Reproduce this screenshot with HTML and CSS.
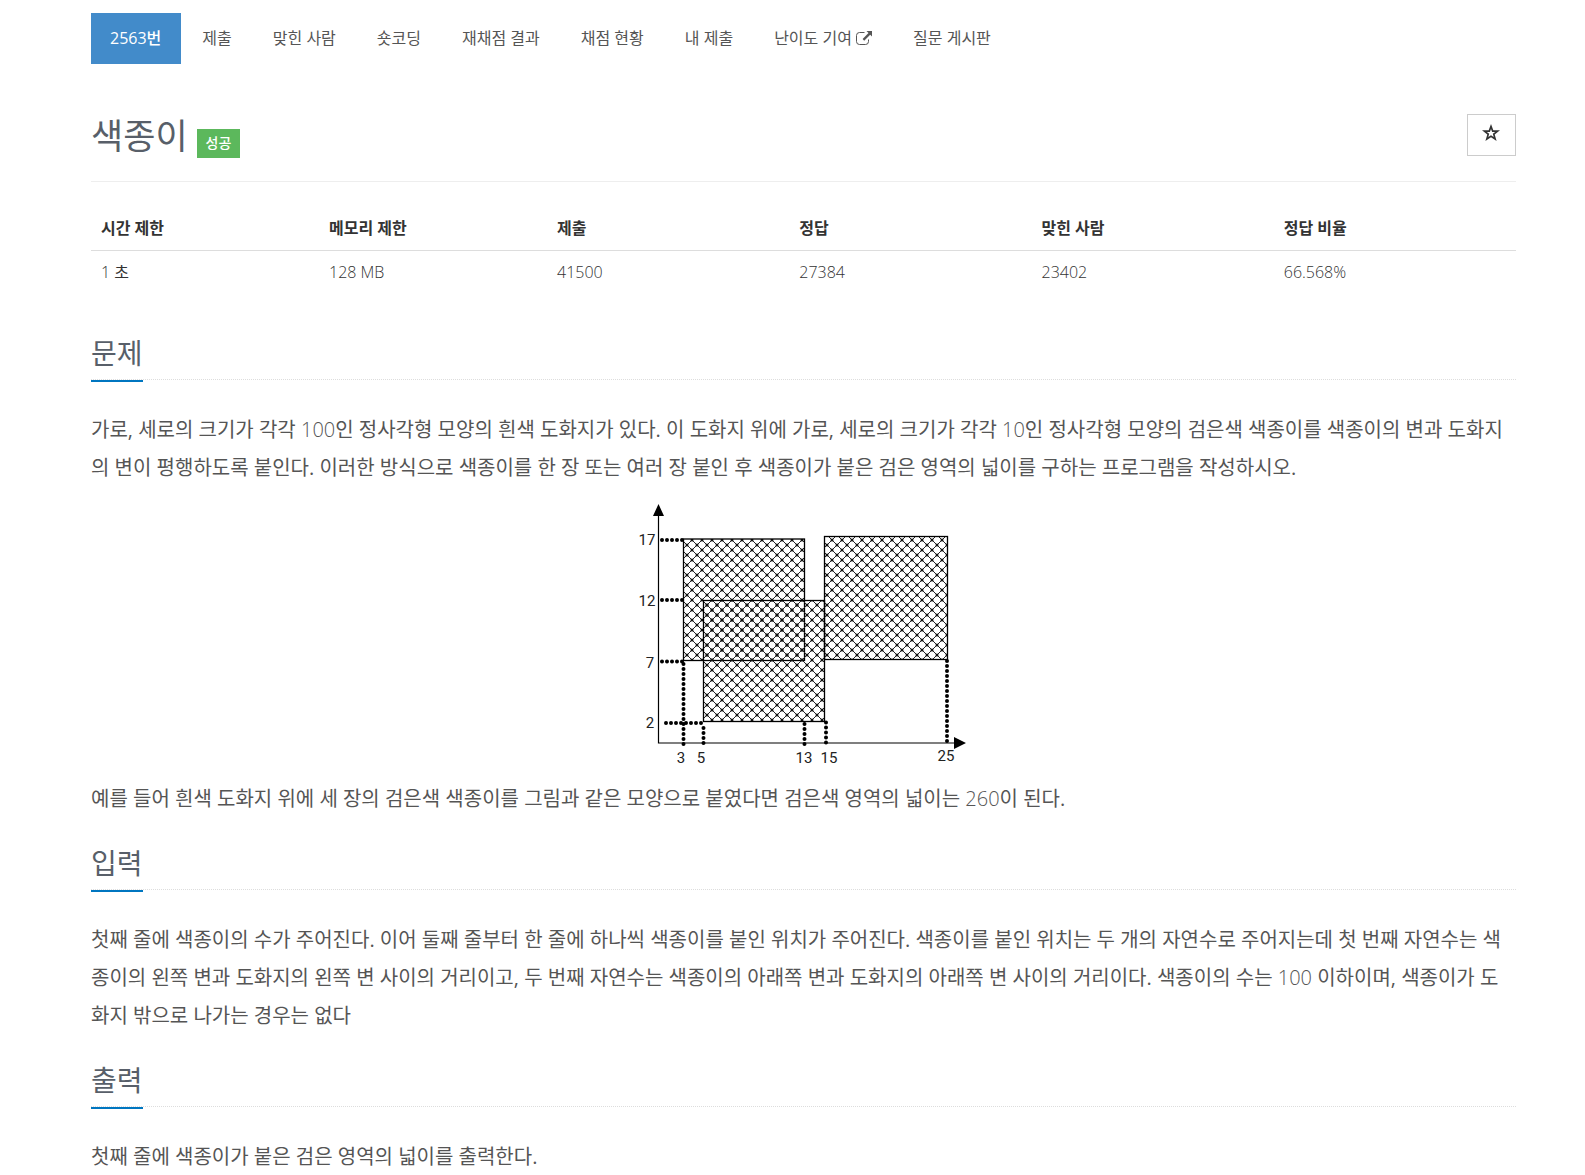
FILE: index.html
```
<!DOCTYPE html>
<html lang="ko">
<head>
  <meta charset="UTF-8" />
  <meta name="viewport" content="width=device-width, initial-scale=1.0"/>
  <title>2563번: 색종이</title>
  <link rel="stylesheet" href="styles.css">
</head>
<body>
  <div class="container">
    <nav>
      <ul class="problem-menu">
        <li><a class="active" href="#">2563번</a></li>
        <li><a href="#">제출</a></li>
        <li><a href="#">맞힌 사람</a></li>
        <li><a href="#">숏코딩</a></li>
        <li><a href="#">재채점 결과</a></li>
        <li><a href="#">채점 현황</a></li>
        <li><a href="#">내 제출</a></li>
        <li><a href="#">난이도 기여 <svg class="icon-external" viewBox="0 0 16 14" aria-hidden="true">
          <path d="M8.500 1.500H3.500Q.5 1.500 .5 4.500V10.500Q.5 13.500 3.500 13.500H9.500Q12.500 13.500 12.500 10.500V8.500" fill="none" stroke="currentColor"/>
          <path d="M10.500 0H16V5.500L14.200 3.700L8.200 9.700L6.600 8.100L12.500 2Z" fill="currentColor"/>
        </svg></a></li>
        <li><a href="#">질문 게시판</a></li>
      </ul>
    </nav>

    <header class="page-header">
      <div class="title">
        <h1>색종이</h1>
        <span class="label-success">성공</span>
      </div>
      <button class="btn-favorite" type="button" aria-label="즐겨찾기">
        <svg viewBox="0 0 18 18" aria-hidden="true">
          <path fill-rule="evenodd" d="M9 0L11.300 6.200H18L12.700 10.400L14.600 17L9 13.200L3.400 17L5.300 10.400L0 6.200H6.700ZM9 5L7.900 7.900H4.800L7.200 9.800L6.300 13L9 11.200L11.700 13L10.800 9.800L13.200 7.900H10.100Z"/>
        </svg>
      </button>
    </header>

    <table class="problem-info">
      <thead>
        <tr>
          <th class="limit">시간 제한</th>
          <th class="limit">메모리 제한</th>
          <th>제출</th>
          <th>정답</th>
          <th>맞힌 사람</th>
          <th>정답 비율</th>
        </tr>
      </thead>
      <tbody>
        <tr>
          <td><span class="num">1</span> 초</td>
          <td class="num">128 MB</td>
          <td class="num">41500</td>
          <td class="num">27384</td>
          <td class="num">23402</td>
          <td class="num">66.568%</td>
        </tr>
      </tbody>
    </table>

    <section>
      <div class="headline"><h2>문제</h2></div>
      <p>가로, 세로의 크기가 각각 <span class="num">100</span>인 정사각형 모양의 흰색 도화지가 있다. 이 도화지 위에 가로, 세로의 크기가 각각 <span class="num">10</span>인 정사각형 모양의 검은색 색종이를 색종이의 변과 도화지의 변이 평행하도록 붙인다. 이러한 방식으로 색종이를 한 장 또는 여러 장 붙인 후 색종이가 붙은 검은 영역의 넓이를 구하는 프로그램을 작성하시오.</p>
      <svg class="figure" viewBox="0 0 336 268" width="336" height="268" role="img" aria-label="색종이 세 장의 배치">
        <defs>
          <pattern id="hatch" x="6" y="0" width="10" height="10" patternUnits="userSpaceOnUse">
            <path d="M-1 -1L11 11M11 -1L-1 11" stroke="#222" stroke-width="1"/>
            <g fill="#111">
              <circle cx="0" cy="0" r="1.500"/>
              <circle cx="10" cy="0" r="1.500"/>
              <circle cx="0" cy="10" r="1.500"/>
              <circle cx="10" cy="10" r="1.500"/>
              <circle cx="5" cy="5" r="1.500"/>
            </g>
          </pattern>
        </defs>

        <!-- papers -->
        <g fill="url(#hatch)" stroke="#000" stroke-width="1.300">
          <rect x="47.500" y="39" width="121" height="121.500"/>
          <rect x="67.500" y="100.500" width="121" height="121"/>
          <rect x="188.500" y="36.500" width="123" height="123"/>
        </g>

        <!-- axes -->
        <path d="M22.500 10V243H322" fill="none" stroke="#000" stroke-width="1.200"/>
        <path d="M22.500 4L28 16H17ZM330 243L318 249V237Z"/>

        <!-- guides -->
        <g class="guides">
          <path d="M26 40H48"/>
          <path d="M26 100H48"/>
          <path d="M26 161.500H48"/>
          <path d="M30 223H68"/>
          <path d="M47.500 164V245"/>
          <path d="M67.500 228V244"/>
          <path d="M168.500 224V245"/>
          <path d="M190 222.500V244"/>
          <path d="M311 161V242"/>
        </g>

        <g class="ticks">
          <text x="11" y="45">17</text>
          <text x="11" y="106">12</text>
          <text x="14" y="168">7</text>
          <text x="14" y="228">2</text>
          <text x="45" y="263">3</text>
          <text x="65" y="263">5</text>
          <text x="168" y="263">13</text>
          <text x="193" y="263">15</text>
          <text x="310" y="261">25</text>
        </g>
      </svg>
      <p>예를 들어 흰색 도화지 위에 세 장의 검은색 색종이를 그림과 같은 모양으로 붙였다면 검은색 영역의 넓이는 <span class="num">260</span>이 된다.</p>
    </section>

    <section>
      <div class="headline"><h2>입력</h2></div>
      <p>첫째 줄에 색종이의 수가 주어진다. 이어 둘째 줄부터 한 줄에 하나씩 색종이를 붙인 위치가 주어진다. 색종이를 붙인 위치는 두 개의 자연수로 주어지는데 첫 번째 자연수는 색종이의 왼쪽 변과 도화지의 왼쪽 변 사이의 거리이고, 두 번째 자연수는 색종이의 아래쪽 변과 도화지의 아래쪽 변 사이의 거리이다. 색종이의 수는 <span class="num">100</span> 이하이며, 색종이가 도화지 밖으로 나가는 경우는 없다</p>
    </section>

    <section>
      <div class="headline"><h2>출력</h2></div>
      <p>첫째 줄에 색종이가 붙은 검은 영역의 넓이를 출력한다.</p>
    </section>
  </div>
</body>
</html>
```
FILE: styles.css
```
* {
  box-sizing: border-box;
}
body {
  margin: 0;
  font-family: "Open Sans", "Noto Sans CJK KR", sans-serif;
  font-size: 16px;
  font-weight: 400;
  color: #333;
  background: #fff;
}
.container {
  margin: 0 69px 0 91px;
  padding-top: 13px;
}
h1, h2, p {
  margin: 0;
}

/* menu */
.problem-menu {
  display: flex;
  gap: 2px;
  margin: 0;
  padding: 0;
  list-style: none;
}
.problem-menu a {
  display: block;
  padding: 0 20px 0 19px;
  line-height: 51px;
  color: #555;
  text-decoration: none;
}
.problem-menu a.active {
  color: #fff;
  background: #428bca;
  font-weight: 500;
}
.icon-external {
  width: 16px;
  height: 14px;
  vertical-align: -1px;
}

/* title */
.page-header {
  display: flex;
  justify-content: space-between;
  align-items: flex-start;
  margin-top: 50px;
  height: 68px;
  border-bottom: 1px solid #eee;
}
.title {
  display: flex;
  align-items: flex-start;
  gap: 9px;
}
h1 {
  font-size: 35px;
  font-weight: 400;
  line-height: 44px;
  color: #585f69;
}
.label-success {
  margin-top: 15px;
  padding: 0 9px 1px;
  font-size: 14px;
  font-weight: 500;
  line-height: 28px;
  color: #fff;
  background: #5cb85c;
}
.btn-favorite {
  display: flex;
  justify-content: center;
  width: 49px;
  height: 42px;
  padding: 9px 2px 0 0;
  background: #fff;
  border: 1px solid #ccc;
  cursor: pointer;
}
.btn-favorite svg {
  width: 18px;
  height: 18px;
  fill: #333;
}

/* limits and counts */
.problem-info {
  width: 100%;
  margin: 23px 0 15px;
  border-collapse: collapse;
  table-layout: fixed;
}
.problem-info th, .problem-info td {
  padding: 0 10px;
  text-align: left;
  line-height: 24px;
}
.problem-info th {
  width: 17%;
  height: 45px;
  padding-top: 2px;
  font-weight: 600;
  border-bottom: 1px solid #ddd;
}
.problem-info th.limit {
  width: 16%;
}
.problem-info td {
  height: 43px;
}
.problem-info .num, .num {
  font-weight: 350;
}

/* sections */
section {
  padding-top: 21px;
}
.headline {
  margin-bottom: 31px;
  border-bottom: 1px dotted #ddd;
}
h2 {
  display: inline-block;
  margin-bottom: -3px;
  padding-bottom: 3px;
  border-bottom: 2px solid #0076c0;
  font-size: 28px;
  font-weight: 400;
  line-height: 48px;
  color: #585f69;
  vertical-align: top;
}
p {
  font-size: 20px;
  line-height: 38px;
  color: #555;
}

/* figure */
.figure {
  display: block;
  margin: 13px auto 12px;
}
.guides path {
  fill: none;
  stroke: #000;
  stroke-width: 4;
  stroke-linecap: round;
  stroke-dasharray: 0 5;
}
.ticks text {
  font-family: Roboto, "Open Sans", sans-serif;
  font-size: 15px;
  font-weight: 400;
  text-anchor: middle;
  fill: #222;
}
```
